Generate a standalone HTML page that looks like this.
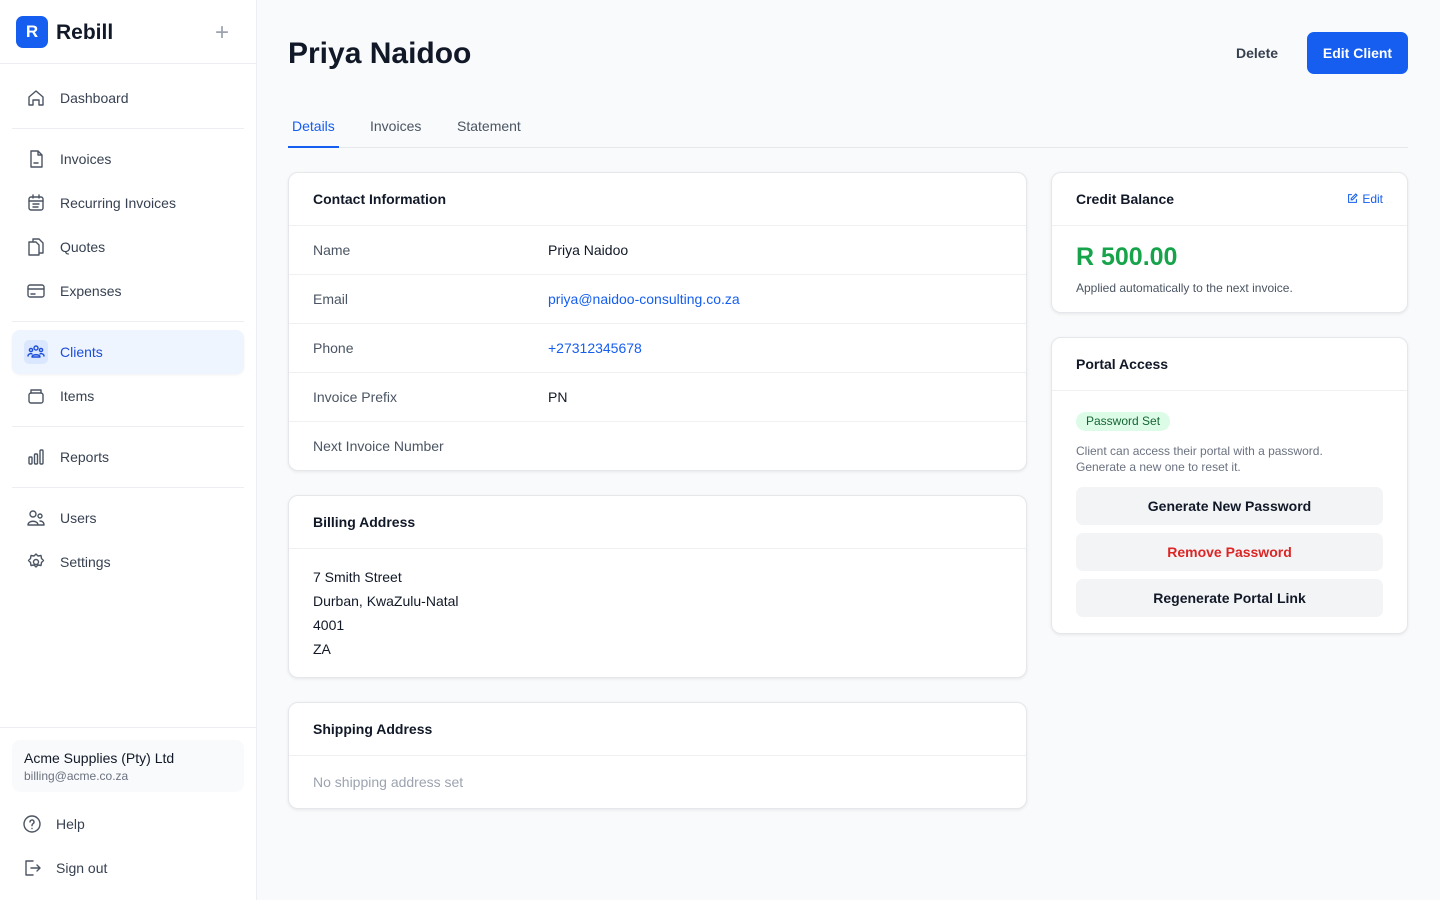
<!DOCTYPE html>
<html><head><meta charset="utf-8">
<style>
*{box-sizing:border-box;margin:0;padding:0}
body{width:1440px;height:900px;font-family:"Liberation Sans",sans-serif;background:#f9fafb;color:#111827;position:relative;overflow:hidden}
.sb{position:absolute;left:0;top:0;width:257px;height:900px;background:#fff;border-right:1px solid #eceef1}
.logo{position:absolute;left:16px;top:16px;width:32px;height:32px;background:#155eef;border-radius:7px;color:#fff;font-weight:bold;font-size:17px;text-align:center;line-height:32px}
.brand{position:absolute;left:56px;top:21px;font-size:21px;font-weight:bold}
.plus{position:absolute;left:215px;top:19px;color:#9ca3af;font-size:24px;font-weight:300}
.hr{position:absolute;left:12px;width:232px;height:1px;background:#eceef1}
.nav{position:absolute;left:12px;width:232px;height:44px;font-size:14px;color:#374151}
.nav svg{position:absolute;left:14px;top:12px;width:20px;height:20px;fill:none;stroke:#4b5563;stroke-width:1.4;stroke-linecap:round;stroke-linejoin:round}
.nav span{position:absolute;left:48px;top:14px}
.nav.act{background:#eff5ff;border-radius:8px;box-shadow:0 1px 2px rgba(0,0,0,.06);color:#1d4ed8}
.nav.act svg{stroke:#1d4ed8}
.nav.act .ib{position:absolute;left:12px;top:10px;width:24px;height:24px;background:#dbe7fe;border-radius:5px}
h1{position:absolute;left:288px;top:37px;font-size:30px;font-weight:bold}
.del{position:absolute;left:1236px;top:45px;font-size:14px;font-weight:bold;color:#374151}
.edit{position:absolute;left:1307px;top:32px;width:101px;height:42px;background:#155eef;color:#fff;border-radius:7px;font-size:14px;font-weight:bold;text-align:center;line-height:42px}
.tabs{position:absolute;left:288px;top:117px;width:1120px;height:31px;border-bottom:1px solid #e5e7eb;font-size:14px;color:#4b5563}
.tabs span{position:absolute;top:1px}
.tabs .on{color:#155eef;border-bottom:2px solid #155eef;height:30px;left:0;padding:0 4px}
.card{position:absolute;background:#fff;border:1px solid #e5e7eb;border-radius:10px;box-shadow:0 1px 3px rgba(0,0,0,.08)}
.ch{height:53px;border-bottom:1px solid #eef0f2;padding:18px 24px;font-size:14px;font-weight:bold}
.row{height:49px;border-bottom:1px solid #eef0f2;position:relative;font-size:14px}
.row .k{position:absolute;left:24px;top:16px;color:#4b5563}
.row .v{position:absolute;left:259px;top:16px}
.blue{color:#155eef}
.btn{position:absolute;left:24px;width:307px;height:38px;background:#f3f4f6;border-radius:7px;font-size:14px;font-weight:bold;text-align:center;line-height:38px}
</style></head><body>
<div class="sb">
<div class="logo">R</div><div class="brand">Rebill</div><div class="plus">+</div>
<div class="hr" style="left:0;width:256px;top:63px"></div>
<div class="nav" style="top:76px"><svg viewBox="0 0 20 20"><path d="M3 9l7-6 7 6v8h-4v-5H7v5H3z"/></svg><span>Dashboard</span></div>
<div class="hr" style="top:128px"></div>
<div class="nav" style="top:137px"><svg viewBox="0 0 20 20"><path d="M5 2h7l4 4v12H5z M12 2v4h4 M8 14h4"/></svg><span>Invoices</span></div>
<div class="nav" style="top:181px"><svg viewBox="0 0 20 20"><rect x="3" y="4" width="14" height="13" rx="2"/><path d="M7 2v3M13 2v3M3 8h14M7 11h6M7 14h5"/></svg><span>Recurring Invoices</span></div>
<div class="nav" style="top:225px"><svg viewBox="0 0 20 20"><path d="M7 5V2h6l4 4v10h-4 M3 5h7l3 3v10H3z"/></svg><span>Quotes</span></div>
<div class="nav" style="top:269px"><svg viewBox="0 0 20 20"><rect x="2" y="4" width="16" height="12" rx="2"/><path d="M2 8h16M5 13h4"/></svg><span>Expenses</span></div>
<div class="hr" style="top:321px"></div>
<div class="nav act" style="top:330px"><div class="ib"></div><svg viewBox="0 0 20 20" style="position:absolute"><circle cx="10" cy="6" r="2"/><circle cx="5" cy="8" r="1.6"/><circle cx="15" cy="8" r="1.6"/><path d="M6 15c0-3 8-3 8 0zM2 14c0-2 3-3 4-2M18 14c0-2-3-3-4-2"/></svg><span>Clients</span></div>
<div class="nav" style="top:374px"><svg viewBox="0 0 20 20"><rect x="3" y="7" width="14" height="10" rx="2"/><path d="M5 7V4h10v3"/></svg><span>Items</span></div>
<div class="hr" style="top:426px"></div>
<div class="nav" style="top:435px"><svg viewBox="0 0 20 20"><rect x="3" y="10" width="3" height="7" rx="1"/><rect x="8.5" y="7" width="3" height="10" rx="1"/><rect x="14" y="3" width="3" height="14" rx="1"/></svg><span>Reports</span></div>
<div class="hr" style="top:487px"></div>
<div class="nav" style="top:496px"><svg viewBox="0 0 20 20"><circle cx="7" cy="6" r="3"/><circle cx="14" cy="8" r="2"/><path d="M2 17c0-5 10-5 10 0zM12 17h6c0-3-2-4-4-4"/></svg><span>Users</span></div>
<div class="nav" style="top:540px"><svg viewBox="0 0 20 20"><circle cx="10" cy="10" r="2.5"/><path d="M10 2l2 2 3-.5.5 3 2 2-2 2-.5 3-3-.5-2 2-2-2-3 .5-.5-3-2-2 2-2 .5-3 3 .5z"/></svg><span>Settings</span></div>
<div class="hr" style="left:0;width:256px;top:727px"></div>
<div style="position:absolute;left:12px;top:740px;width:232px;height:52px;background:#f9fafb;border-radius:8px">
<div style="position:absolute;left:12px;top:10px;font-size:14px">Acme Supplies (Pty) Ltd</div>
<div style="position:absolute;left:12px;top:29px;font-size:12px;color:#6b7280">billing@acme.co.za</div></div>
<div class="nav" style="top:802px;left:8px"><svg viewBox="0 0 20 20"><circle cx="10" cy="10" r="8"/><path d="M8 8a2 2 0 1 1 3 1.7c-1 .5-1 1-1 2M10 14.5v.1"/></svg><span>Help</span></div>
<div class="nav" style="top:846px;left:8px"><svg viewBox="0 0 20 20"><path d="M11 3H4v14h7M9 10h9M15 7l3 3-3 3"/></svg><span>Sign out</span></div>
</div>

<h1>Priya Naidoo</h1>
<div class="del">Delete</div>
<div class="edit">Edit Client</div>
<div class="tabs"><span class="on">Details</span><span style="left:82px">Invoices</span><span style="left:169px">Statement</span></div>

<div class="card" style="left:288px;top:172px;width:739px;height:299px">
<div class="ch">Contact Information</div>
<div class="row"><span class="k">Name</span><span class="v">Priya Naidoo</span></div>
<div class="row"><span class="k">Email</span><span class="v blue">priya@naidoo-consulting.co.za</span></div>
<div class="row"><span class="k">Phone</span><span class="v blue">+27312345678</span></div>
<div class="row"><span class="k">Invoice Prefix</span><span class="v">PN</span></div>
<div class="row" style="border:none"><span class="k">Next Invoice Number</span></div>
</div>

<div class="card" style="left:288px;top:495px;width:739px;height:183px">
<div class="ch">Billing Address</div>
<div style="padding:16px 24px;font-size:14px;line-height:24px">7 Smith Street<br>Durban, KwaZulu-Natal<br>4001<br>ZA</div>
</div>

<div class="card" style="left:288px;top:702px;width:739px;height:107px">
<div class="ch">Shipping Address</div>
<div style="padding:18px 24px;font-size:14px;color:#9ca3af">No shipping address set</div>
</div>

<div class="card" style="left:1051px;top:172px;width:357px;height:141px">
<div class="ch">Credit Balance<span class="blue" style="position:absolute;right:24px;top:19px;font-size:12px;font-weight:normal">
<svg viewBox="0 0 20 20" width="13" height="13" style="vertical-align:-2px;fill:none;stroke:#155eef;stroke-width:1.6"><path d="M9 4H4v12h12v-5M15 3l2 2-7 7H8v-2z"/></svg> Edit</span></div>
<div style="position:absolute;left:24px;top:70px;font-size:25px;font-weight:bold;color:#16a34a">R 500.00</div>
<div style="position:absolute;left:24px;top:108px;font-size:12px;color:#4b5563">Applied automatically to the next invoice.</div>
</div>

<div class="card" style="left:1051px;top:337px;width:357px;height:297px">
<div class="ch">Portal Access</div>
<div style="position:absolute;left:24px;top:74px;height:19px;padding:0 10px;background:#dcfce7;color:#166534;border-radius:10px;font-size:12px;line-height:19px">Password Set</div>
<div style="position:absolute;left:24px;top:105px;font-size:12px;color:#6b7280;line-height:16px">Client can access their portal with a password.<br>Generate a new one to reset it.</div>
<div class="btn" style="top:149px">Generate New Password</div>
<div class="btn" style="top:195px;color:#dc2626">Remove Password</div>
<div class="btn" style="top:241px">Regenerate Portal Link</div>
</div>
</body></html>
